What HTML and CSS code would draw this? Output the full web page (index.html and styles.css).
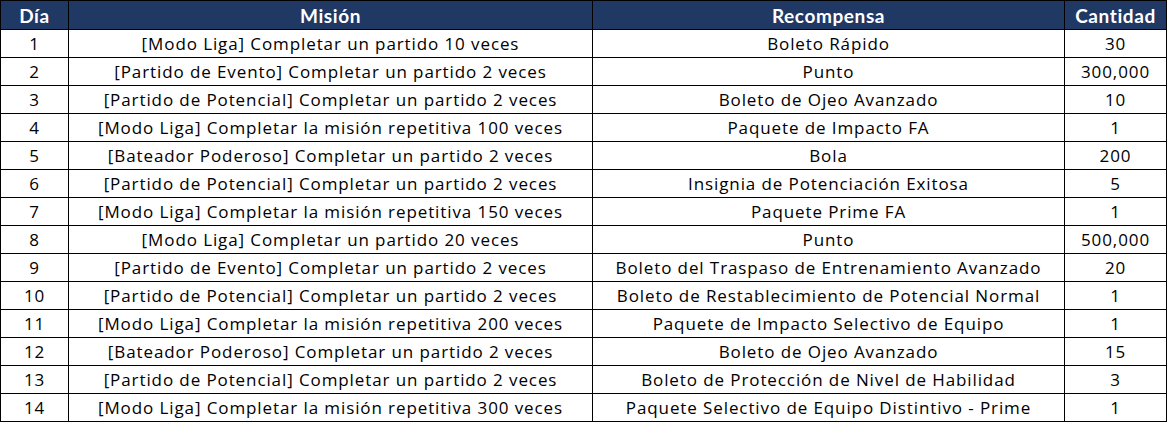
FILE: index.html
```html
<!DOCTYPE html>
<html lang="es">
<head>
<meta charset="utf-8">
<title>Misiones</title>
<link rel="stylesheet" href="styles.css">
</head>
<body>
<div class="table">
  <div class="th">Día</div><div class="th">Misión</div><div class="th">Recompensa</div><div class="th">Cantidad</div>
  <div class="td">1</div><div class="td">[Modo Liga] Completar un partido 10 veces</div><div class="td">Boleto Rápido</div><div class="td">30</div>
  <div class="td">2</div><div class="td">[Partido de Evento] Completar un partido 2 veces</div><div class="td">Punto</div><div class="td">300,000</div>
  <div class="td">3</div><div class="td">[Partido de Potencial] Completar un partido 2 veces</div><div class="td">Boleto de Ojeo Avanzado</div><div class="td">10</div>
  <div class="td">4</div><div class="td">[Modo Liga] Completar la misión repetitiva 100 veces</div><div class="td">Paquete de Impacto FA</div><div class="td">1</div>
  <div class="td">5</div><div class="td">[Bateador Poderoso] Completar un partido 2 veces</div><div class="td">Bola</div><div class="td">200</div>
  <div class="td">6</div><div class="td">[Partido de Potencial] Completar un partido 2 veces</div><div class="td">Insignia de Potenciación Exitosa</div><div class="td">5</div>
  <div class="td">7</div><div class="td">[Modo Liga] Completar la misión repetitiva 150 veces</div><div class="td">Paquete Prime FA</div><div class="td">1</div>
  <div class="td">8</div><div class="td">[Modo Liga] Completar un partido 20 veces</div><div class="td">Punto</div><div class="td">500,000</div>
  <div class="td">9</div><div class="td">[Partido de Evento] Completar un partido 2 veces</div><div class="td">Boleto del Traspaso de Entrenamiento Avanzado</div><div class="td">20</div>
  <div class="td">10</div><div class="td">[Partido de Potencial] Completar un partido 2 veces</div><div class="td">Boleto de Restablecimiento de Potencial Normal</div><div class="td">1</div>
  <div class="td">11</div><div class="td">[Modo Liga] Completar la misión repetitiva 200 veces</div><div class="td">Paquete de Impacto Selectivo de Equipo</div><div class="td">1</div>
  <div class="td">12</div><div class="td">[Bateador Poderoso] Completar un partido 2 veces</div><div class="td">Boleto de Ojeo Avanzado</div><div class="td">15</div>
  <div class="td">13</div><div class="td">[Partido de Potencial] Completar un partido 2 veces</div><div class="td">Boleto de Protección de Nivel de Habilidad</div><div class="td">3</div>
  <div class="td">14</div><div class="td">[Modo Liga] Completar la misión repetitiva 300 veces</div><div class="td">Paquete Selectivo de Equipo Distintivo - Prime</div><div class="td">1</div>
</div>
</body>
</html>
```
FILE: styles.css
```css
html, body {
  margin: 0;
  padding: 0;
  background: #ffffff;
}
.table {
  display: grid;
  grid-template-columns: 67px 523px 471px 101px;
  grid-template-rows: 28px repeat(14, 27px);
  gap: 1px;
  padding: 1px;
  background: #000000;
  width: max-content;
}
.th, .td {
  display: flex;
  align-items: center;
  justify-content: center;
  white-space: nowrap;
}
.th {
  background: #203864;
  color: #ffffff;
  font-family: "Lato", "Open Sans", sans-serif;
  font-weight: 700;
  font-size: 19px;
  letter-spacing: 0.6px;
}
.td {
  background: #ffffff;
  color: #000000;
  font-family: "Open Sans", "Noto Sans", sans-serif;
  font-size: 17px;
  letter-spacing: 0.9px;
}
```
